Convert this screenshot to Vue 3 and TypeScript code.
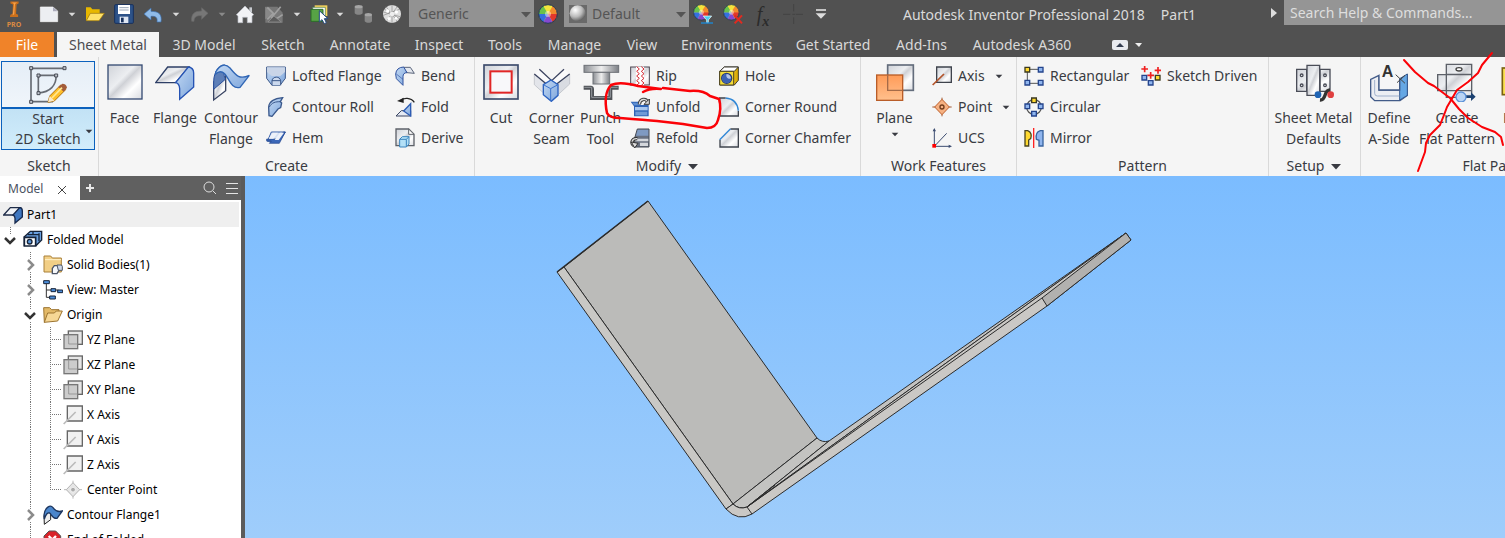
<script setup lang="ts">
import { ref } from 'vue'

interface Tab { label: string; width: number }
interface Tool { label: string; icon: string; menu?: boolean }
interface BigTool { lines: string[]; icon: string; width: number; menu?: boolean }
interface Column { width: number; indent: number; tools: Tool[] }
interface Panel { name: string; title: string; width: number; menu?: boolean; big: BigTool[]; columns: Column[] }
interface Node { label: string; icon: string; level: number; state?: 'open' | 'closed'; last?: boolean }

const material = ref('Generic')
const appearance = ref('Default')
const query = ref('')

const tabs: Tab[] = [
  { label: '3D Model', width: 90 },
  { label: 'Sketch', width: 68 },
  { label: 'Annotate', width: 86 },
  { label: 'Inspect', width: 72 },
  { label: 'Tools', width: 60 },
  { label: 'Manage', width: 79 },
  { label: 'View', width: 56 },
  { label: 'Environments', width: 113 },
  { label: 'Get Started', width: 100 },
  { label: 'Add-Ins', width: 77 },
  { label: 'Autodesk A360', width: 124 },
]

const panels: Panel[] = [
  {
    name: 'create', title: 'Create', width: 376,
    big: [
      { lines: ['Face'], icon: 'face', width: 51 },
      { lines: ['Flange'], icon: 'flange', width: 50 },
      { lines: ['Contour', 'Flange'], icon: 'contour', width: 62 },
    ],
    columns: [
      { width: 129, indent: 4, tools: [
        { label: 'Lofted Flange', icon: 'lofted' },
        { label: 'Contour Roll', icon: 'roll' },
        { label: 'Hem', icon: 'hem' },
      ] },
      { width: 83, indent: 4, tools: [
        { label: 'Bend', icon: 'bend' },
        { label: 'Fold', icon: 'fold' },
        { label: 'Derive', icon: 'derive' },
      ] },
    ],
  },
  {
    name: 'modify', title: 'Modify', width: 386, menu: true,
    big: [
      { lines: ['Cut'], icon: 'cut', width: 52 },
      { lines: ['Corner', 'Seam'], icon: 'seam', width: 49 },
      { lines: ['Punch', 'Tool'], icon: 'punch', width: 49 },
    ],
    columns: [
      { width: 90, indent: 5, tools: [
        { label: 'Rip', icon: 'rip' },
        { label: 'Unfold', icon: 'unfold' },
        { label: 'Refold', icon: 'refold' },
      ] },
      { width: 145, indent: 4, tools: [
        { label: 'Hole', icon: 'hole' },
        { label: 'Corner Round', icon: 'round' },
        { label: 'Corner Chamfer', icon: 'chamfer' },
      ] },
    ],
  },
  {
    name: 'work', title: 'Work Features', width: 156,
    big: [{ lines: ['Plane'], icon: 'plane', width: 67, menu: true }],
    columns: [
      { width: 88, indent: 4, tools: [
        { label: 'Axis', icon: 'axis', menu: true },
        { label: 'Point', icon: 'point', menu: true },
        { label: 'UCS', icon: 'ucs' },
      ] },
    ],
  },
  {
    name: 'pattern', title: 'Pattern', width: 252, big: [],
    columns: [
      { width: 120, indent: 7, tools: [
        { label: 'Rectangular', icon: 'rectangular' },
        { label: 'Circular', icon: 'circular' },
        { label: 'Mirror', icon: 'mirror' },
      ] },
      { width: 131, indent: 4, tools: [{ label: 'Sketch Driven', icon: 'driven' }] },
    ],
  },
  {
    name: 'setup', title: 'Setup', width: 92, menu: true,
    big: [{ lines: ['Sheet Metal', 'Defaults'], icon: 'defaults', width: 89 }],
    columns: [],
  },
  {
    name: 'flat', title: 'Flat Pattern', width: 280,
    big: [
      { lines: ['Define', 'A-Side'], icon: 'aside', width: 56 },
      { lines: ['Create', 'Flat Pattern'], icon: 'flat', width: 80 },
      { lines: ['E'], icon: 'export', width: 20 },
    ],
    columns: [],
  },
]

const nodes: Node[] = [
  { label: 'Part1', icon: 't-part', level: 0 },
  { label: 'Folded Model', icon: 't-folded', level: 1, state: 'open', last: true },
  { label: 'Solid Bodies(1)', icon: 't-solid', level: 2, state: 'closed' },
  { label: 'View: Master', icon: 't-view', level: 2, state: 'closed' },
  { label: 'Origin', icon: 't-folder', level: 2, state: 'open' },
  { label: 'YZ Plane', icon: 't-plane', level: 3 },
  { label: 'XZ Plane', icon: 't-plane', level: 3 },
  { label: 'XY Plane', icon: 't-plane', level: 3 },
  { label: 'X Axis', icon: 't-axis', level: 3 },
  { label: 'Y Axis', icon: 't-axis', level: 3 },
  { label: 'Z Axis', icon: 't-axis', level: 3 },
  { label: 'Center Point', icon: 't-point', level: 3, last: true },
  { label: 'Contour Flange1', icon: 't-contour', level: 2, state: 'closed' },
  { label: 'End of Folded', icon: 't-end', level: 2 },
]
</script>

<template>
  <div class="app">
    <svg class="defs" aria-hidden="true">
      <defs>
        <linearGradient id="steel" x1="0" y1="0" x2="1" y2="1">
          <stop offset="0" stop-color="#d0d3d9" /><stop offset=".4" stop-color="#eceef1" />
          <stop offset=".5" stop-color="#cfd1d6" /><stop offset=".7" stop-color="#fff" /><stop offset="1" stop-color="#d9dbe0" />
        </linearGradient>
        <linearGradient id="blue" x1="0" y1="0" x2="1" y2="1">
          <stop offset="0" stop-color="#c3d9f3" /><stop offset="1" stop-color="#7ea6dc" />
        </linearGradient>
        <linearGradient id="orange" x1="0" y1="0" x2="0" y2="1">
          <stop offset="0" stop-color="#ff9b58" /><stop offset="1" stop-color="#ffc08d" />
        </linearGradient>
        <linearGradient id="yellow" x1="0" y1="0" x2="1" y2="0">
          <stop offset="0" stop-color="#ffe75a" /><stop offset="1" stop-color="#d9a800" />
        </linearGradient>
        <linearGradient id="metal" x1="0" y1="0" x2="1" y2="0">
          <stop offset="0" stop-color="#8b8e93" /><stop offset=".5" stop-color="#eee" /><stop offset="1" stop-color="#7c7f85" />
        </linearGradient>
        <radialGradient id="ball" cx=".35" cy=".3" r=".7">
          <stop offset="0" stop-color="#fff" /><stop offset=".6" stop-color="#bbb" /><stop offset="1" stop-color="#666" />
        </radialGradient>
      </defs>

      <!-- quick access icons -->
      <symbol id="logo" viewBox="0 0 60 78">
        <path d="M16 2h32v8l-8 4-2 36 8 4v8H14l2-8 8-4 2-36-10-4z" fill="#c96f1c" />
        <path d="M22 6h20l-8 6-3 40-6 4 5-44z" fill="#f5a14a" />
      </symbol>
      <symbol id="new" viewBox="0 0 60 60"><path d="M4 9h38l14 12v32H4z" fill="#eceef2" stroke="#f8f8f8" stroke-width="2" /><path d="M42 9v13h14z" fill="#aab" /></symbol>
      <symbol id="open" viewBox="0 0 60 60">
        <path d="M3 10h14l5 6h22v12H16L3 52z" fill="#e8b800" /><path d="M16 28h42L42 50H4z" fill="#ffe26a" stroke="#a87c00" stroke-width="2" />
      </symbol>
      <symbol id="save" viewBox="0 0 60 60">
        <rect x="2" y="2" width="56" height="56" rx="3" fill="#2d5288" stroke="#17305c" stroke-width="3" /><rect x="12" y="3" width="36" height="27" fill="#fff" />
        <path d="M16 11h28M16 18h28" stroke="#9aa6b8" stroke-width="3" /><rect x="17" y="38" width="26" height="19" fill="#dfe6f2" /><rect x="21" y="41" width="8" height="14" fill="#17305c" />
      </symbol>
      <symbol id="undo" viewBox="0 0 60 60"><path d="M3 30L24 12v10c22 0 34 8 30 32H42c2-14-4-18-18-17v11z" fill="#8fbbe9" stroke="#3d6fad" stroke-width="2" /></symbol>
      <symbol id="redo" viewBox="0 0 60 60"><path d="M57 28L38 11v10C16 21 6 30 8 52h7c0-12 6-18 23-17v11z" fill="#777" stroke="#696969" stroke-width="2" /></symbol>
      <symbol id="home" viewBox="0 0 60 60">
        <path d="M43 10h8v14h-8z" fill="#c8cbd0" /><path d="M30 6L4 32l5 4v20h14V40h14v16h14V36l5-4z" fill="#f1f2f5" stroke="#b9bcc4" stroke-width="2" />
      </symbol>
      <symbol id="update" viewBox="0 0 60 60">
        <path d="M4 8h36l16 18v30H4z" fill="#777" /><path d="M4 8l26 20L4 46z" fill="#888" /><path d="M10 10l18 18-18 18M50 8L24 40l14 4 18-12" fill="none" stroke="#a0a0a0" stroke-width="5" /><path d="M30 36l22 18H12z" fill="#5c5c5c" stroke="#999" stroke-width="2" />
      </symbol>
      <symbol id="select" viewBox="0 0 60 60">
        <path d="M14 4h38v32H14z" fill="#f8d45c" /><path d="M8 10h38v34H8z" fill="#fff" stroke="#447a44" stroke-width="2" /><path d="M3 16h36v36H3z" fill="#57a345" stroke="#2b6d27" stroke-width="3" />
        <path d="M28 20v34l8-7 7 12 6-3-6-12h11z" fill="#fff" stroke="#234a80" stroke-width="3" />
      </symbol>
      <symbol id="bodies" viewBox="0 0 60 60">
        <path d="M5 8v20c6 6 18 6 24 0V8z" fill="#868686" /><ellipse cx="17" cy="8" rx="12" ry="5" fill="#a6a6a6" />
        <path d="M35 32v20c6 6 18 6 22 0V32z" fill="#868686" /><ellipse cx="46" cy="32" rx="11" ry="5" fill="#a6a6a6" />
      </symbol>
      <symbol id="sphere-grid" viewBox="0 0 60 60">
        <circle cx="30" cy="30" r="27" fill="#dedede" /><path d="M8 16l44 28M30 3v54M4 34l48-18M14 50L46 8M12 8l34 44M4 24l50 14" stroke="#8a8a8a" stroke-width="2" fill="none" />
        <circle cx="30" cy="30" r="7" fill="#eee" /><circle cx="17" cy="21" r="5" fill="#fff" /><circle cx="43" cy="24" r="5" fill="#fff" /><circle cx="21" cy="44" r="5" fill="#fff" /><circle cx="42" cy="43" r="4" fill="#fff" />
      </symbol>
      <symbol id="wheel" viewBox="0 0 60 60">
        <circle cx="30" cy="30" r="28" fill="#f3e43c" /><path d="M30 30L16 6a28 28 0 0 1 28 0z" fill="#f3e43c" />
        <path d="M30 30L44 6a28 28 0 0 1 14 24z" fill="#f18a2c" /><path d="M30 30h28a28 28 0 0 1-14 24z" fill="#e2382c" />
        <path d="M30 30l14 24a28 28 0 0 1-28 0z" fill="#8548cf" /><path d="M30 30L16 54A28 28 0 0 1 2 30z" fill="#356fe0" /><path d="M30 30H2A28 28 0 0 1 16 6z" fill="#69c24b" />
        <circle cx="30" cy="30" r="9" fill="#fff" opacity=".45" /><circle cx="30" cy="30" r="28" fill="none" stroke="#1c3457" stroke-width="3" />
      </symbol>
      <symbol id="wheel-pick" viewBox="0 0 60 60"><use href="#wheel" x="0" y="0" width="50" height="50" /><path d="M31 36h25L46 48v8h-5v-8z" fill="#4ad0f4" stroke="#fff" stroke-width="2" /><path d="M24 57h36" stroke="#1a8ad8" stroke-width="4" /></symbol>
      <symbol id="wheel-clear" viewBox="0 0 60 60"><use href="#wheel" x="0" y="0" width="50" height="50" /><path d="M35 34l22 24M57 34L35 58" stroke="#e12a20" stroke-width="6" /></symbol>
      <symbol id="cross" viewBox="0 0 60 60"><path d="M0 31h22M38 31h22M32 0v22M32 40v20M28 31h8" stroke="#444" stroke-width="3" /></symbol>
      <symbol id="more" viewBox="0 0 48 48"><path d="M9 12h30" stroke="#ddd" stroke-width="5" /><path d="M8 22h32L24 38z" fill="#ddd" /></symbol>
      <symbol id="caret" viewBox="0 0 24 24"><path d="M2 8h20L12 19z" fill="currentColor" /></symbol>
      <symbol id="swatch" viewBox="0 0 54 54"><rect width="54" height="54" fill="#6a6a6a" /><circle cx="26" cy="25" r="24" fill="url(#ball)" /></symbol>

      <!-- large ribbon icons -->
      <symbol id="sketch" viewBox="0 0 120 120">
        <path d="M9 10h101M9 10v100h66M31 31h53M31 31v53M84 31c2 30-18 50-53 53" fill="none" stroke="#666b73" stroke-width="5" />
        <g fill="#bfc4cc" stroke="#474b55" stroke-width="3"><path d="M5 5h9v9H5zM105 5h9v9h-9zM5 106h9v9H5zM27 27h9v9h-9zM80 27h9v9h-9zM27 80h9v9h-9z" /></g>
        <path d="M60 112l5-19 33-33 15 14-34 34z" fill="#ffbf29" stroke="#ad7110" stroke-width="3" /><path d="M60 112l5-19 14 14z" fill="#f9e8c9" /><path d="M91 66l12-10q12 0 14 12l-10 12z" fill="#a35c3a" /><path d="M72 99l30-31" stroke="#ffe893" stroke-width="5" />
      </symbol>
      <symbol id="face" viewBox="0 0 120 120"><rect x="9" y="9" width="102" height="102" fill="url(#steel)" stroke="#374c74" stroke-width="4" /></symbol>
      <symbol id="flange" viewBox="0 0 120 120">
        <path d="M2 62L38 15h64L62 62z" fill="url(#steel)" stroke="#2e3f66" stroke-width="4" />
        <path d="M100 15q16 2 16 18v42l-42 37V80q-1-16-12-18L100 15z" fill="url(#blue)" stroke="#2653b4" stroke-width="4" />
      </symbol>
      <symbol id="contour" viewBox="0 0 120 120">
        <path d="M8 60l36-32v58L8 114z" fill="url(#steel)" stroke="#3a4563" stroke-width="4" /><path d="M8 60C8 25 28 8 42 9c-4 18-4 38 2 42L8 82z" fill="#5d7fb8" stroke="#294f9c" stroke-width="3" />
        <path d="M14 30C28 6 44 4 57 18c18 22 28 36 58 22L87 76C62 84 52 46 41 35 32 27 22 28 14 36z" fill="url(#blue)" stroke="#3066b5" stroke-width="4" />
      </symbol>
      <symbol id="cut" viewBox="0 0 120 120"><rect x="9" y="9" width="102" height="102" fill="url(#steel)" stroke="#3d4c6c" stroke-width="5" /><rect x="28" y="28" width="64" height="64" fill="#f8f8fa" stroke="#e12626" stroke-width="6" /></symbol>
      <symbol id="seam" viewBox="0 0 120 120">
        <path d="M7 36l40 32v36L7 68z" fill="#e3e5ea" stroke="#b4b8c0" stroke-width="2" /><path d="M113 36L72 66v38l41-38z" fill="#d9dce2" stroke="#b4b8c0" stroke-width="2" />
        <path d="M7 36l15-14 38 34 36-34 17 14-41 30-12-8-14 8z" fill="#fafafb" />
        <path d="M22 22l37 34 37-34M7 36l36 30M113 36L74 66" stroke="#3c4460" stroke-width="4" fill="none" />
        <path d="M34 68l23-14 21 14v32l-20 18-24-20z" fill="url(#blue)" stroke="#2b62c0" stroke-width="4" /><path d="M34 68l22 12 22-12M56 80v36" stroke="#3c74ce" stroke-width="3" fill="none" />
      </symbol>
      <symbol id="punch" viewBox="0 0 120 120">
        <rect x="9" y="10" width="104" height="21" fill="url(#metal)" stroke="#6d7177" stroke-width="3" /><rect x="36" y="31" width="50" height="35" fill="url(#metal)" stroke="#6d7177" stroke-width="3" />
        <path d="M8 77h21q4 0 4 5v26h55V82q0-5 4-5h21" fill="none" stroke="#4f5257" stroke-width="12" /><path d="M10 76h22v30h56V76h22" fill="none" stroke="#93979d" stroke-width="3" />
      </symbol>
      <symbol id="plane" viewBox="0 0 120 120"><rect x="38" y="9" width="77" height="76" fill="url(#steel)" stroke="#646d7c" stroke-width="5" /><rect x="5" y="39" width="78" height="76" fill="url(#orange)" stroke="#b95d28" stroke-width="4" /><path d="M38 40v45h44" fill="none" stroke="#a56b48" stroke-width="4" /></symbol>
      <symbol id="defaults" viewBox="0 0 120 120">
        <path d="M8 22h30v66H8zM78 22h30v66H78z" fill="url(#steel)" stroke="#4a4d58" stroke-width="4" /><path d="M39 10h38v90H39z" fill="url(#steel)" stroke="#4a4d58" stroke-width="4" />
        <g fill="#fff" stroke="#4a4d58" stroke-width="4"><circle cx="23" cy="40" r="4" /><circle cx="23" cy="70" r="4" /><circle cx="93" cy="40" r="4" /><circle cx="93" cy="70" r="4" /></g>
        <path d="M78 114c20 2 10-30 30-30" stroke="#333" stroke-width="10" fill="none" /><circle cx="72" cy="98" r="10" fill="#2065b5" /><circle cx="110" cy="98" r="10" fill="#e04040" />
      </symbol>
      <symbol id="aside" viewBox="0 0 120 120">
        <path d="M30 40v44h62l23-48v64l-22 16H17L5 104V52z" fill="#eceef3" stroke="#425b88" stroke-width="4" /><path d="M92 50l23-14v64l-23 14z" fill="#65a7e4" stroke="#365a90" stroke-width="3" />
        <path d="M30 40v44h62V50" fill="#f6f6f7" stroke="#425b88" stroke-width="4" /><path d="M17 54v40q0 8 8 8h66" fill="none" stroke="#9fb0cc" stroke-width="3" /><path d="M80 38l28 26M108 40L84 62" stroke="#444" stroke-width="3" />
        <text x="38" y="46" font-family="Liberation Sans, sans-serif" font-size="48" font-weight="bold" fill="#333">A</text>
      </symbol>
      <symbol id="flat" viewBox="0 0 120 120">
        <path d="M2 38h26v48H2zM28 38h76v48H28zM28 7h76v30H28zM28 86h76v20H28z" fill="url(#steel)" stroke="#5c6068" stroke-width="4" /><ellipse cx="66" cy="22" rx="9" ry="5" fill="#fff" stroke="#444" stroke-width="4" />
        <path d="M74 100h28V91l14 13-14 13v-9H74z" fill="#1c4170" /><circle cx="72" cy="105" r="15" fill="#b9d4f5" stroke="#5d92d8" stroke-width="4" />
      </symbol>
      <symbol id="export" viewBox="0 0 120 120"><rect x="46" y="18" width="70" height="80" fill="url(#yellow)" stroke="#7a6110" stroke-width="5" /></symbol>

      <!-- small ribbon icons -->
      <symbol id="lofted" viewBox="0 0 60 60"><path d="M2 3h56v34L42 58H18L2 37z" fill="url(#blue)" stroke="#3a5687" stroke-width="3" /><path d="M3 4h54v14l-14 12H17L3 18z" fill="#c9d5e8" /><path d="M18 58V44c2-14 24-14 26 0v14M18 44h26" fill="#cbd9ee" stroke="#3a5687" stroke-width="3" /></symbol>
      <symbol id="roll" viewBox="0 0 60 60"><path d="M8 30C10 12 24 4 50 2l-7 12 4 4-3 14-8 4-18 22-9-2z" fill="url(#blue)" stroke="#3a588c" stroke-width="4" /><path d="M10 30c8-14 18-16 34-16" fill="none" stroke="#3a588c" stroke-width="3" /></symbol>
      <symbol id="hem" viewBox="0 0 60 60"><path d="M16 12h42L40 40H4z" fill="#d6e2f4" stroke="#3860aa" stroke-width="3" /><path d="M2 33h34l16-21h6L40 46H10l6-7H2z" fill="#3c68b8" stroke="#1f438c" stroke-width="2" /><path d="M20 14h16L22 32H8zM42 14h12L38 36H26z" fill="#eef2f9" /></symbol>
      <symbol id="bend" viewBox="0 0 60 60"><path d="M24 4h22l12 18-22-2z" fill="#e4e8ef" stroke="#59647a" stroke-width="3" /><path d="M2 24Q4 4 26 3l10 17c-8 0-12 4-12 12v26L4 38z" fill="url(#blue)" stroke="#3153a0" stroke-width="3" /><path d="M4 24l20 16" stroke="#3153a0" stroke-width="2" /></symbol>
      <symbol id="fold" viewBox="0 0 60 60"><path d="M3 57l16-16h28v16z" fill="#e5eaf3" stroke="#3a4563" stroke-width="3" /><path d="M26 42l21-22v37z" fill="url(#blue)" stroke="#2d5cb4" stroke-width="4" /><path d="M58 16C48 2 26 0 16 12" fill="none" stroke="#222" stroke-width="4" /><path d="M6 12L26 2v16z" fill="#222" /></symbol>
      <symbol id="derive" viewBox="0 0 60 60"><path d="M3 3h38l16 16v34H3z" fill="url(#steel)" stroke="#5e6269" stroke-width="4" /><path d="M41 3v16h16z" fill="#fff" stroke="#5e6269" stroke-width="3" /><path d="M14 34l8-8h20v22l-8 9H14z" fill="#b3e0f7" stroke="#3a84bd" stroke-width="3" /><path d="M14 34h20v22M34 34l8-8" fill="none" stroke="#3a84bd" stroke-width="3" /></symbol>
      <symbol id="rip" viewBox="0 0 60 60"><rect x="2" y="3" width="56" height="54" fill="url(#steel)" stroke="#4c4550" stroke-width="3" /><path d="M18 2h24v56H18z" fill="#fff" /><path d="M20 2l8 7-8 7 8 7-8 7 8 7-8 7 8 7-8 7M34 2l8 7-8 7 8 7-8 7 8 7-8 7 8 7-8 7" fill="none" stroke="#d62630" stroke-width="3" /></symbol>
      <symbol id="unfold" viewBox="0 0 60 60"><path d="M2 14h24l6 10h24v34H12V28z" fill="#2d63b6" /><path d="M15 30h38v10H15z" fill="#a9c7ee" /><path d="M16 44h36v11H16z" fill="#6f9bd6" /><path d="M6 17h18l5 8H13z" fill="#5f8fd2" /><path d="M28 22C30 4 48 4 52 14" fill="none" stroke="#3f3f3f" stroke-width="10" /><path d="M28 22C30 4 48 4 52 14" fill="none" stroke="#ddd" stroke-width="4" /><path d="M58 6v16H42z" fill="#ddd" stroke="#333" stroke-width="3" /></symbol>
      <symbol id="refold" viewBox="0 0 60 60"><path d="M22 3h35v54H14V30z" fill="#687080" stroke="#444a55" stroke-width="3" /><path d="M23 5h32v18H18z" fill="#7f9ac2" /><path d="M15 32h40v8H15zM30 44h24v10H30z" fill="#d4d7dc" /><path d="M22 32C4 30 2 48 12 53" fill="none" stroke="#333" stroke-width="10" /><path d="M22 32C4 30 2 48 12 53" fill="none" stroke="#ddd" stroke-width="4" /><path d="M4 42l20 4-10 14z" fill="#ddd" stroke="#333" stroke-width="3" /></symbol>
      <symbol id="hole" viewBox="0 0 60 60"><path d="M2 16L16 3h42v40L46 57H2z" fill="url(#yellow)" stroke="#3c3a30" stroke-width="3" /><path d="M2 16L16 3h42L46 16z" fill="#fff" stroke="#3c3a30" stroke-width="3" /><path d="M2 16h42v41H2z" fill="#f3dc38" stroke="#4c4422" stroke-width="3" /><circle cx="23" cy="37" r="15" fill="#b3c3e6" stroke="#273b78" stroke-width="4" /><path d="M23 23a14 14 0 1 0 14 14c-10 4-18-4-14-14z" fill="#3b62b4" /></symbol>
      <symbol id="round" viewBox="0 0 60 60"><path d="M2 3h18c24 2 36 18 38 38v16H2z" fill="url(#steel)" /><path d="M20 3H2v54h56V41" fill="none" stroke="#3e434c" stroke-width="4" /><path d="M20 3c24 2 36 18 38 38" fill="none" stroke="#2e86d6" stroke-width="4" /></symbol>
      <symbol id="chamfer" viewBox="0 0 60 60"><path d="M3 35L34 3h24v54H3z" fill="url(#steel)" /><path d="M3 35v22h55V3H34" fill="none" stroke="#3e434c" stroke-width="4" /><path d="M2 35L34 3" stroke="#2e86d6" stroke-width="4" /></symbol>
      <symbol id="axis" viewBox="0 0 60 60"><path d="M14 3h44v46H14z" fill="url(#steel)" stroke="#3e434c" stroke-width="4" /><path d="M2 57l34-33" stroke="#b4542a" stroke-width="5" /></symbol>
      <symbol id="point" viewBox="0 0 60 60"><path d="M1 30h58M30 2v56" stroke="#a05a34" stroke-width="3" /><path d="M30 7l22 23-22 23L8 30z" fill="#f6b182" stroke="#be602c" stroke-width="3" /><circle cx="30" cy="30" r="6" fill="#f6b182" stroke="#713c1c" stroke-width="4" /></symbol>
      <symbol id="ucs" viewBox="0 0 60 60"><path d="M7 4v50M6 55h48M8 54l36-38" fill="none" stroke="#3c4c70" stroke-width="3" /><path d="M7 0l5 10H2zM60 55l-10-5v10z" fill="#3c4c70" /><rect x="1" y="48" width="11" height="11" fill="red" /></symbol>
      <symbol id="rectangular" viewBox="0 0 60 60"><path d="M10 10h40M10 10v42h40" fill="none" stroke="#555" stroke-width="3" /><g fill="#8fb5ee" stroke="#24448c" stroke-width="4"><path d="M43 4h14v14H43zM3 43h14v14H3zM43 43h14v14H43z" /><path d="M3 4h14v14H3z" fill="#ffd930" stroke="#3c3a20" /></g></symbol>
      <symbol id="circular" viewBox="0 0 60 60"><circle cx="30" cy="30" r="22" fill="none" stroke="#555" stroke-width="4" /><g fill="#8fb5ee" stroke="#24448c" stroke-width="4"><path d="M3 21h14v14H3zM43 21h14v14H43zM23 43h14v14H23z" /><path d="M23 3h14v14H23z" fill="#ffd930" stroke="#3c3a20" /></g></symbol>
      <symbol id="mirror" viewBox="0 0 60 60"><path d="M3 8h8c12 4 12 16 9 24l-6 4v18H3z" fill="#ffd930" stroke="#4b4620" stroke-width="4" /><path d="M57 8h-8c-12 4-14 16-12 26l8 3v17h12z" fill="#8fb5ee" stroke="#38639f" stroke-width="4" /><path d="M29 0v60" stroke="#f22" stroke-width="4" /></symbol>
      <symbol id="driven" viewBox="0 0 60 60"><path d="M1 9h20M11 0v19M19 28h20M29 18v20M41 13h20M51 3v20" stroke="#f02020" stroke-width="5" /><g fill="#8fb5ee" stroke="#24448c" stroke-width="4"><path d="M3 28h14v14H3zM22 44h14v13H22z" /><path d="M43 28h14v14H43z" fill="#ffd930" stroke="#3c3a20" /></g></symbol>

      <!-- browser tree icons -->
      <symbol id="t-part" viewBox="0 0 60 60"><path d="M2 30L22 8h30L34 30z" fill="#f1f3f7" stroke="#1f2c48" stroke-width="4" /><path d="M50 8q8 0 8 10v18L36 54V40q0-8-6-10z" fill="#3f77c0" stroke="#17294d" stroke-width="4" /></symbol>
      <symbol id="t-folded" viewBox="0 0 60 60"><path d="M4 20L22 4h34v26L40 46H4z" fill="#6aa0e0" stroke="#162338" stroke-width="4" /><path d="M4 22h34v26H4z" fill="#fff" stroke="#162338" stroke-width="5" /><circle cx="20" cy="35" r="7" fill="#5a98dc" stroke="#162338" stroke-width="4" /><path d="M14 14h34M30 12V5M48 10v24" stroke="#162338" stroke-width="4" /></symbol>
      <symbol id="t-solid" viewBox="0 0 60 60"><path d="M3 3h20l5 6h27v42H3z" fill="#f2cf86" stroke="#a98038" stroke-width="3" /><path d="M6 14h48" stroke="#fff1c9" stroke-width="3" /><path d="M28 40l6-8h14v14l-6 10H28z" fill="#f6f8fb" stroke="#4d5667" stroke-width="4" /><path d="M42 30h12q4 0 4 5v11H46z" fill="#cfd8e8" stroke="#4d5667" stroke-width="3" /></symbol>
      <symbol id="t-view" viewBox="0 0 60 60"><path d="M10 12v40h14M10 30h18M38 30h8" fill="none" stroke="#333" stroke-width="3" /><path d="M2 2h17v9H2zM24 26h14v9H24zM44 30h15v8H44zM20 48h17v9H20z" fill="#4c8fdc" stroke="#162338" stroke-width="3" /></symbol>
      <symbol id="t-folder" viewBox="0 0 60 60"><path d="M2 8h18l6 6h22v8L4 52z" fill="#e3b967" stroke="#9c7430" stroke-width="3" /><path d="M14 24h20l6-6h18L44 48 4 52z" fill="#f6d795" stroke="#9c7430" stroke-width="3" /></symbol>
      <symbol id="t-plane" viewBox="0 0 60 60"><rect x="16" y="3" width="42" height="40" fill="#e6e6e6" stroke="#666" stroke-width="4" /><rect x="3" y="14" width="41" height="42" fill="#ccc" stroke="#777" stroke-width="4" /><path d="M17 15v27h26" fill="none" stroke="#999" stroke-width="3" /></symbol>
      <symbol id="t-axis" viewBox="0 0 60 60"><path d="M13 3h45v45H13z" fill="#f1f1f1" stroke="#666" stroke-width="4" /><path d="M2 57l36-36" stroke="#bbb" stroke-width="5" /></symbol>
      <symbol id="t-point" viewBox="0 0 60 60"><path d="M3 29h54M30 2v54" stroke="#bbb" stroke-width="3" /><path d="M30 8l20 21-20 21L10 29z" fill="#e6e6e6" stroke="#b4b4b4" stroke-width="3" /><circle cx="30" cy="29" r="7" fill="#aaa" stroke="#fff" stroke-width="2" /></symbol>
      <symbol id="t-contour" viewBox="0 0 60 60"><path d="M3 32l20-14v26L4 58z" fill="#eee" stroke="#222" stroke-width="3" /><path d="M3 30C6 6 22-2 30 8c8 12 16 14 28 10L42 40c-14 2-16-12-22-16C14 22 8 28 4 42z" fill="#4a86cc" stroke="#1c355e" stroke-width="4" /></symbol>
      <symbol id="t-end" viewBox="0 0 60 60"><path d="M18 3h20l15 15v22L38 55H18L3 40V18z" fill="#d8232a" stroke="#555" stroke-width="3" /><path d="M17 18l22 22M39 18L17 40" stroke="#fff" stroke-width="7" /></symbol>
    </svg>

    <header class="titlebar">
      <div class="brand"><svg class="brand-mark"><use href="#logo" /></svg><span>PRO</span></div>
      <div class="quick">
        <button aria-label="New"><svg><use href="#new" /></svg></button>
        <button class="drop" aria-label="New options"><svg><use href="#caret" /></svg></button>
        <button aria-label="Open"><svg><use href="#open" /></svg></button>
        <button aria-label="Save"><svg><use href="#save" /></svg></button>
        <button aria-label="Undo"><svg><use href="#undo" /></svg></button>
        <button class="drop" aria-label="Undo list"><svg><use href="#caret" /></svg></button>
        <button aria-label="Redo"><svg><use href="#redo" /></svg></button>
        <button class="drop dim" aria-label="Redo list"><svg><use href="#caret" /></svg></button>
        <button aria-label="Home"><svg><use href="#home" /></svg></button>
        <button aria-label="Update"><svg><use href="#update" /></svg></button>
        <button class="drop" aria-label="Update options"><svg><use href="#caret" /></svg></button>
        <span class="pair">
          <button aria-label="Select"><svg><use href="#select" /></svg></button>
          <button class="drop" aria-label="Select options"><svg><use href="#caret" /></svg></button>
        </span>
        <button aria-label="Bodies"><svg><use href="#bodies" /></svg></button>
        <button aria-label="Physical material"><svg><use href="#sphere-grid" /></svg></button>
      </div>
      <div class="combo">
        <select v-model="material" aria-label="Material"><option>Generic</option></select>
        <svg class="combo-caret"><use href="#caret" /></svg>
      </div>
      <button class="wheel" aria-label="Appearance browser"><svg><use href="#wheel" /></svg></button>
      <div class="combo swatched">
        <select v-model="appearance" aria-label="Appearance"><option>Default</option></select>
        <svg class="combo-swatch"><use href="#swatch" /></svg>
        <svg class="combo-caret"><use href="#caret" /></svg>
      </div>
      <div class="quick tail">
        <button aria-label="Adjust appearance"><svg><use href="#wheel-pick" /></svg></button>
        <button aria-label="Clear appearance"><svg><use href="#wheel-clear" /></svg></button>
        <button class="fx" aria-label="Parameters"><i>f</i><sub>x</sub></button>
        <button aria-label="Measure"><svg><use href="#cross" /></svg></button>
        <button class="more" aria-label="Customize"><svg><use href="#more" /></svg></button>
      </div>
      <div class="title"><span>Autodesk Inventor Professional 2018</span><span>Part1</span></div>
      <button class="expand" aria-label="Expand search"><svg viewBox="0 0 8 12"><path d="M1 1l6 5-6 5z" fill="#ddd" /></svg></button>
      <input v-model="query" class="search" type="text" aria-label="Search" placeholder="Search Help &amp; Commands..." />
    </header>

    <nav class="tabs">
      <button class="file">File</button>
      <button class="active">Sheet Metal</button>
      <button v-for="t in tabs" :key="t.label" :style="{ width: t.width + 'px' }">{{ t.label }}</button>
      <button class="collapse" aria-label="Minimize ribbon">
        <svg viewBox="0 0 32 12"><rect x="1" y="1" width="16" height="10" rx="2" fill="#e8eaef" /><path d="M5 8l4-4 4 4z" fill="#333c50" /><path d="M24 4h7l-3 4z" fill="#eee" /></svg>
      </button>
    </nav>

    <section class="ribbon">
      <div class="panel start-panel">
        <div class="panel-body">
          <div class="split">
            <button class="split-top" aria-label="Start 2D Sketch"><svg><use href="#sketch" /></svg></button>
            <button class="split-bottom"><span>Start<br />2D Sketch</span><svg class="tiny"><use href="#caret" /></svg></button>
          </div>
        </div>
        <div class="panel-title">Sketch</div>
      </div>
      <div v-for="p in panels" :key="p.name" class="panel" :style="{ width: p.width + 'px' }">
        <div class="panel-body">
          <button v-for="b in p.big" :key="b.icon" class="big" :style="{ width: b.width + 'px' }">
            <svg><use :href="'#' + b.icon" /></svg>
            <span v-for="l in b.lines" :key="l">{{ l }}</span>
            <svg v-if="b.menu" class="tiny"><use href="#caret" /></svg>
          </button>
          <div v-for="(c, i) in p.columns" :key="i" class="column" :style="{ width: c.width + 'px', paddingLeft: c.indent + 'px' }">
            <button v-for="t in c.tools" :key="t.label" class="small">
              <svg><use :href="'#' + t.icon" /></svg>
              <span>{{ t.label }}</span>
              <svg v-if="t.menu" class="tiny"><use href="#caret" /></svg>
            </button>
          </div>
        </div>
        <div class="panel-title">{{ p.title }}<svg v-if="p.menu"><use href="#caret" /></svg></div>
      </div>
    </section>

    <main class="work">
      <aside class="browser">
        <div class="browser-tabs">
          <div class="browser-tab">
            <span>Model</span>
            <button aria-label="Close"><svg viewBox="0 0 10 10"><path d="M1 1l8 8M9 1L1 9" stroke="#444" /></svg></button>
          </div>
          <button class="add" aria-label="Add browser"><svg viewBox="0 0 10 10"><path d="M5 1v8M1 5h8" stroke="#e8e8e8" stroke-width="2" /></svg></button>
          <button class="find" aria-label="Search browser"><svg viewBox="0 0 14 14"><circle cx="6" cy="6" r="5" fill="none" stroke="#ddd" /><path d="M10 10l3 3" stroke="#ddd" /></svg></button>
          <button class="menu" aria-label="Browser menu"><svg viewBox="0 0 12 12"><path d="M0 1.5h12M0 6.5h12M0 11.5h12" stroke="#e4e4e4" /></svg></button>
        </div>
        <ul class="tree">
          <li v-for="n in nodes" :key="n.label" :class="['node', 'level-' + n.level, { last: n.last }]">
            <span v-if="n.level > 1" class="guide"></span>
            <span v-if="n.level > 2" class="guide line"></span>
            <span v-if="n.level > 0" class="guide line joint">
              <svg v-if="n.state" :class="n.state" viewBox="0 0 12 12"><path d="M4 1l5 5-5 5" fill="none" stroke="currentColor" stroke-width="2.5" /></svg>
            </span>
            <svg class="node-icon"><use :href="'#' + n.icon" /></svg>
            <span class="node-label">{{ n.label }}</span>
          </li>
        </ul>
      </aside>

      <div class="canvas">
        <svg class="part" viewBox="245 176 1260 362" role="img" aria-label="Folded sheet metal part">
          <g stroke="#2b2b2b" stroke-width="1" stroke-linejoin="round">
            <path d="M564 267L648 201 817 438 733 504z" fill="#bbbbb9" />
            <path d="M557 272L564 267 733 504 726 509z" fill="#c9c8c5" />
            <path d="M557 272L648 201" fill="none" stroke-width="1.5" />
            <path d="M733 504L817 438Q822 443 829 441L747 507Q739 510 733 504z" fill="#c3c3c1" />
            <path d="M747 507L829 441 1126 233z" fill="#c4c3c1" />
            <path d="M726 509L733 504Q739 510 747 507L1126 233 1131 240 1047 306 752 514Q738 522 726 509z" fill="#cac8c5" />
            <path d="M1042 298L1126 233 1131 240 1047 306z" fill="#b2b1af" />
            <path d="M747 507L752 514M747 507L1042 298M747 507L775 485" fill="none" />
          </g>
        </svg>
      </div>
    </main>

    <svg class="markup" viewBox="0 0 1505 180" aria-hidden="true">
      <g fill="none" stroke="#fb0207" stroke-width="2" stroke-linecap="round" stroke-linejoin="round">
        <path stroke-width="2.5" d="M643 92Q650 88 661 89L638 86Q620 81 611 85Q603 94 607 113Q609 118 620 118Q646 120 657 121L683 124L707 128Q716 128 718 120Q722 108 719 99L710 96Q703 90 690 91L663 88" />
        <path d="M1404 60L1415 72 1428 83 1434 86 1450 98 1459 109 1468 118 1482 127 1495 132 1501 137 1503 145" />
        <path d="M1492 53L1482 65 1478 73 1468 82 1457 90 1447 107 1444 115 1440 125 1430 135 1426 143 1425 152 1418 171" />
      </g>
    </svg>
  </div>
</template>

<style>
html, body { margin: 0; overflow: hidden; }
</style>

<style scoped>
.app {
  position: relative;
  display: flex;
  flex-direction: column;
  height: 100vh;
  overflow: hidden;
  font-family: "Noto Sans", "Open Sans", sans-serif;
  font-size: 14px;
  color: #393b42;
  background: #515151;
}
.defs { position: absolute; width: 0; height: 0; }
button, input, select {
  margin: 0;
  padding: 0;
  border: 0;
  background: none;
  color: inherit;
  font: inherit;
}
svg { display: block; flex: none; }

.titlebar { display: flex; height: 32px; color: #dadada; }
.brand { display: flex; flex-direction: column; align-items: center; width: 28px; margin-right: 11px; color: #d98a42; font-size: 7px; line-height: 8px; font-weight: 700; }
.brand-mark { width: 16px; height: 20px; margin-top: 1px; }
.quick { display: flex; align-items: center; gap: 9px; height: 27px; }
.quick svg, .wheel svg { width: 20px; height: 20px; }
.quick .drop svg { width: 8px; height: 8px; }
.quick .dim { color: #8a8a8a; }
.pair { display: flex; align-items: center; gap: 6px; }
.combo { display: grid; align-items: center; width: 125px; height: 27px; margin-left: 7px; background: #929292; color: #555; }
.combo select { grid-area: 1 / 1; width: 100%; height: 27px; padding-left: 9px; appearance: none; }
.combo svg { grid-area: 1 / 1; pointer-events: none; }
.combo-caret { justify-self: end; width: 12px; height: 12px; margin-right: 2px; }
.combo-swatch { width: 18px; height: 18px; margin-left: 5px; }
.swatched { margin-left: 6px; }
.swatched select { padding-left: 28px; }
.wheel { display: flex; align-items: center; height: 27px; margin-left: 4px; }
.tail { gap: 10px; margin-left: 4px; }
.fx { width: 20px; color: #2b2b2b; font-family: "Liberation Serif", serif; font-size: 20px; line-height: 20px; white-space: nowrap; }
.fx sub { font-size: 14px; line-height: 0; font-style: italic; font-weight: 700; }
.quick .more svg { width: 16px; height: 16px; }
.title { flex: 1; display: flex; justify-content: center; gap: 16px; line-height: 30px; white-space: nowrap; }
.expand { width: 8px; height: 26px; margin-right: 6px; }
.expand svg { width: 8px; height: 12px; }
.search { width: 221px; height: 25px; padding: 0 6px; box-sizing: border-box; background: #959595; color: #e6e6e6; }
.search::placeholder { color: #dedede; opacity: 1; }

.tabs { display: flex; height: 25px; color: #d9d9d9; }
.tabs button { flex: none; white-space: nowrap; line-height: 25px; }
.tabs .file { width: 54px; margin-right: 3px; background: #f08329; color: #fff; }
.tabs .active { width: 102px; background: #f5f5f5; color: #4b4b50; }
.tabs .collapse { margin-left: 27px; }
.collapse svg { width: 32px; height: 12px; }

.ribbon { display: flex; height: 119px; background: #f5f5f5; }
.panel { flex: none; display: flex; flex-direction: column; box-sizing: border-box; border-right: 1px solid #d9d9d9; }
.start-panel { width: 99px; }
.panel-body { display: flex; height: 98px; }
.panel-title { display: flex; justify-content: center; align-items: center; gap: 6px; line-height: 21px; white-space: nowrap; }
.panel-title svg { width: 12px; height: 12px; }
.split { width: 94px; height: 89px; margin: 4px 0 0 1px; box-sizing: border-box; border: 1px solid #0b61bd; background: #d9ecf8; }
.split button { display: flex; justify-content: center; width: 100%; }
.split-top { height: 45px; align-items: center; background: linear-gradient(#e5eef7, #f0f5fa); }
.split-top svg { width: 40px; height: 40px; }
.split .split-bottom { position: relative; height: 42px; box-sizing: border-box; border-top: 2px solid #0b61bd; background: linear-gradient(#c2e2f5, #d2edfb); line-height: 20px; text-align: center; }
.split-bottom .tiny { position: absolute; right: 1px; top: 18px; }
.tiny { width: 8px; height: 8px; }
.big { flex: none; display: flex; flex-direction: column; align-items: center; padding-top: 5px; line-height: 21px; white-space: nowrap; }
.big svg { width: 40px; height: 40px; margin-bottom: 5px; }
.big .tiny { width: 8px; height: 8px; margin-top: 2px; }
.column { flex: none; box-sizing: border-box; padding-top: 3px; }
.small { display: flex; align-items: center; gap: 6px; height: 31px; white-space: nowrap; }
.small svg { width: 20px; height: 20px; }
.small .tiny { width: 8px; height: 8px; margin-left: 4px; }

.work { flex: 1; display: flex; min-height: 0; }
.browser { flex: none; display: flex; flex-direction: column; width: 241px; overflow: hidden; border-right: 4px solid #5b5b5b; background: #fff; color: #000; font-size: 12px; }
.browser-tabs { flex: none; display: flex; align-items: center; height: 24px; margin-bottom: 2px; background: #606060; }
.browser-tab { display: flex; align-items: center; justify-content: space-between; width: 80px; height: 24px; padding: 0 13px 0 8px; box-sizing: border-box; background: #fff; color: #4b5262; }
.browser-tab svg { width: 10px; height: 10px; margin-top: 4px; }
.add { margin-left: 5px; }
.add svg { width: 10px; height: 10px; }
.find { margin-left: auto; }
.find svg { width: 14px; height: 14px; }
.menu { margin: 0 3px 0 9px; }
.menu svg { width: 12px; height: 12px; }
.tree { margin: 0; padding: 0; list-style: none; }
.node { display: flex; align-items: center; height: 25px; white-space: nowrap; }
.level-0 { margin-right: 2px; background: #efefef; }
.guide { display: flex; align-items: center; justify-content: center; width: 20px; height: 25px; }
.line { background: repeating-linear-gradient(#777 0 1px, transparent 1px 2px) 10px 0 / 1px 100% no-repeat; }
.last .joint { background-size: 1px 13px; }
.joint svg { width: 12px; height: 12px; background: #fff; color: #8b8b8b; }
.joint .open { color: #333; transform: rotate(90deg); }
.node-icon { width: 20px; height: 20px; margin: 0 4px 0 3px; }
.level-3 .joint { position: relative; }
.level-3 .joint::after { content: ""; position: absolute; left: 12px; top: 12px; width: 10px; height: 1px; background: repeating-linear-gradient(90deg, #777 0 1px, transparent 1px 2px); }
.canvas { flex: 1; min-width: 0; overflow: hidden; background: linear-gradient(#7bbcff, #9fcdfb); }
.part { width: 1260px; height: 362px; }

.markup { position: absolute; left: 0; top: 0; width: 1505px; height: 180px; pointer-events: none; }
</style>
